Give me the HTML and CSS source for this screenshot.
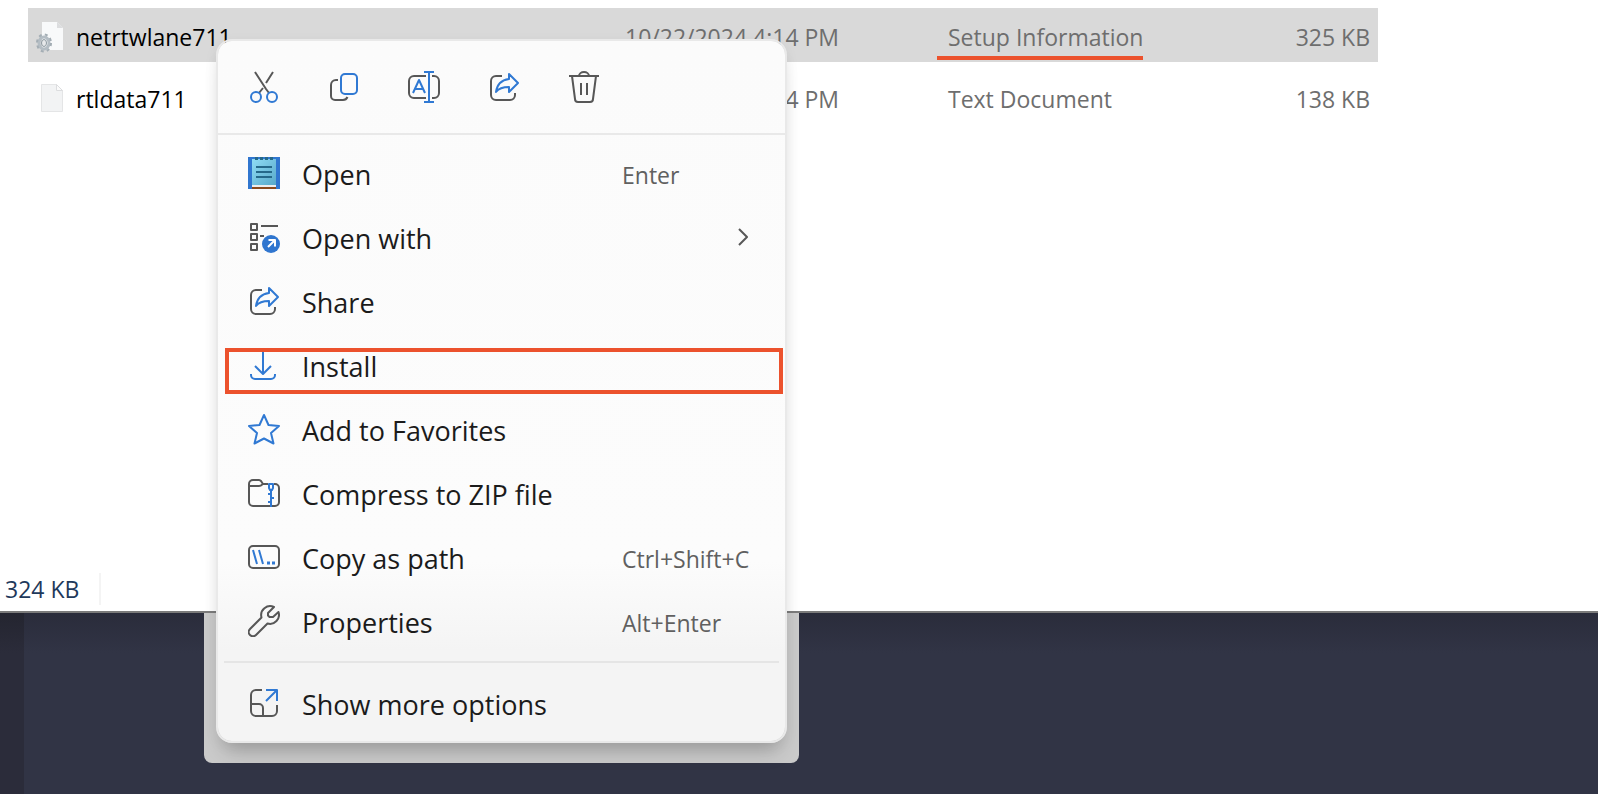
FILE: index.html
```html
<!DOCTYPE html>
<html lang="en">
<head>
<meta charset="utf-8">
<title>File Explorer</title>
<link rel="stylesheet" href="styles.css">
</head>
<body>
<main class="window">
  <table class="files">
    <colgroup><col class="col-name"><col class="col-date"><col class="col-type"><col></colgroup>
    <tbody>
      <tr class="file file-selected">
        <td class="name"><div class="name-box">
          <svg class="file-icon" viewBox="0 0 28 32" aria-hidden="true">
            <path d="M6 1h15l6 6v22H6z" fill="#f8f9fa"/><path d="M21 1l6 6h-6z" fill="#dcdddf"/>
            <ellipse cx="8" cy="22" rx="5" ry="6" fill="none" stroke="#b4bdc4" stroke-width="3"/>
            <ellipse cx="8" cy="22" rx="7" ry="8.500" fill="none" stroke="#a3adb4" stroke-width="2" stroke-dasharray="3 3.200"/>
            <ellipse cx="8" cy="22" rx="2.500" ry="3.500" fill="#e6e8ea" stroke="#8b979f"/>
          </svg>netrtwlane711</div></td>
        <td>10/22/2024 4:14 PM</td>
        <td><span class="marked">Setup Information</span></td>
        <td class="size">325 KB</td>
      </tr>
      <tr class="file">
        <td class="name"><div class="name-box">
          <svg class="file-icon" viewBox="0 0 28 32" aria-hidden="true">
            <path d="M5.500 1.500h15l6 6v21h-21z" fill="#f2f3f4" stroke="#e4e5e6"/><path d="M20.500 1.500v6h6z" fill="#fafafa" stroke="#dcdddf"/>
          </svg>rtldata711</div></td>
        <td>10/22/2024 4:14 PM</td>
        <td>Text Document</td>
        <td class="size">138 KB</td>
      </tr>
    </tbody>
  </table>
  <footer class="status"><span class="status-size">324 KB</span></footer>
</main>
<div class="desktop"><div class="desktop-edge"></div><div class="menu-backdrop"></div></div>

<div class="menu" role="menu">
  <div class="tools">
    <button class="tool" aria-label="Cut"><svg class="icon" viewBox="0 0 32 32"><path d="M7 1l11 17 3 4M25 1l-7 11M15 17l-4 5"/><g class="blue"><circle cx="8" cy="26" r="5"/><circle cx="24" cy="26" r="5"/></g></svg></button>
    <button class="tool" aria-label="Copy"><svg class="icon" viewBox="0 0 32 32"><path d="M10 9H8a5 5 0 0 0-5 5v11a4 4 0 0 0 4 4h8a5 5 0 0 0 4.500-3"/><rect class="blue" x="13" y="3" width="16" height="20" rx="4"/></svg></button>
    <button class="tool" aria-label="Rename"><svg class="icon" viewBox="0 0 32 32"><path d="M18 5H6a5 5 0 0 0-5 5v12a5 5 0 0 0 5 5h12M24 5h2a5 5 0 0 1 5 5v12a5 5 0 0 1-5 5h-2"/><path class="blue" d="M16 1h10M16 31h10M21 1v30M5 22l6-13 6 13M7 18h8"/></svg></button>
    <button class="tool" aria-label="Share"><svg class="icon" viewBox="0 0 32 32"><path d="M14 5H8a5 5 0 0 0-5 5v14a5 5 0 0 0 5 5h14a5 5 0 0 0 5-5v-2"/><path class="blue" d="M21 3l9 9-9 9v-5c-6 0-10 1-13 5 1-8 6-12 13-13z"/></svg></button>
    <button class="tool" aria-label="Delete"><svg class="icon" viewBox="0 0 32 32"><path d="M1 5h30M11 5a5 4 0 0 1 10 0M4 5l3 23a3 3 0 0 0 3 3h12a3 3 0 0 0 3-3l3-23M13 12v12M19 12v12"/></svg></button>
  </div>
  <div class="items">
    <button class="item" role="menuitem"><svg class="icon" viewBox="0 0 32 32">
      <defs><linearGradient id="pad" x1="0" y1="0" x2="1" y2="1"><stop offset="0" stop-color="#8fdcf5"/><stop offset="1" stop-color="#58a9c9"/></linearGradient></defs>
      <g stroke="none"><path d="M0 0h32v32H0z" fill="#3076cf"/><path d="M4 2h24v26H4z" fill="url(#pad)"/><path d="M4 28h24v2H4z" fill="#eee"/><path d="M4 30h24v2H4z" fill="#8a4a1c"/></g>
      <path d="M8 10h16M8 15h16M8 20h16" stroke="#25698a"/><path d="M8.500 0v3M13.500 0v3M18.500 0v3M23.500 0v3" stroke="#25698a" stroke-width="3"/></svg><span class="label">Open</span><kbd class="shortcut">Enter</kbd></button>
    <button class="item" role="menuitem"><svg class="icon" viewBox="0 0 32 32"><path d="M3 3h6v6H3zM3 13h6v6H3zM3 23h6v6H3zM13 5h17M12 15h4"/><circle cx="23" cy="23" r="9" fill="#3076cf" stroke="none"/><path d="M20 26l6-6M20.500 19H27v6.500" stroke="#fff"/></svg><span class="label">Open with</span><svg class="chevron" viewBox="0 0 10 18"><path d="M1 1l8 8-8 8"/></svg></button>
    <button class="item" role="menuitem"><svg class="icon" viewBox="0 0 32 32"><path d="M14 5H8a5 5 0 0 0-5 5v14a5 5 0 0 0 5 5h14a5 5 0 0 0 5-5v-2"/><path class="blue" d="M21 3l9 9-9 9v-5c-6 0-10 1-13 5 1-8 6-12 13-13z"/></svg><span class="label">Share</span></button>
    <button class="item item-marked" role="menuitem"><svg class="icon" viewBox="0 0 32 32"><path class="blue" d="M15 1v24M7 17l8 8 8-8M3 25v1a4 4 0 0 0 4 4h16a4 4 0 0 0 4-4v-1"/></svg><span class="label">Install</span></button>
    <button class="item" role="menuitem"><svg class="icon" viewBox="0 0 32 32"><path class="blue" d="M16 2l4.500 10 10.500 1-8 7 2.500 10.500-9.500-5-9.500 5L9 20l-8-7 10.500-1z"/></svg><span class="label">Add to Favorites</span></button>
    <button class="item" role="menuitem"><svg class="icon" viewBox="0 0 32 32"><path d="M20 7h-5l-2-3a3 3 0 0 0-2-1H5a4 4 0 0 0-4 4v18a4 4 0 0 0 4 4h22a4 4 0 0 0 4-4V11a4 4 0 0 0-4-4h-1M1 9h10c3 0 3-2 4-2"/><path class="blue" d="M21 7h4v4l-1 2h-2l-1-2zM23 13v17M20 17h3M23 21h3M20 25h3"/></svg><span class="label">Compress to ZIP file</span></button>
    <button class="item" role="menuitem"><svg class="icon" viewBox="0 0 32 32"><rect x="1" y="5" width="30" height="22" rx="4"/><path class="blue" d="M5 9l4 14M11 9l4 14"/><path class="blue" stroke-width="3" d="M19 22h3M24 22h3"/></svg><span class="label">Copy as path</span><kbd class="shortcut">Ctrl+Shift+C</kbd></button>
    <button class="item" role="menuitem"><svg class="icon" viewBox="0 0 32 32"><path d="M26 2a9 9 0 0 0-12.500 10.500L2 24a4 4 0 0 0 6 6l11.500-11.500A9 9 0 0 0 30.500 7L25 12h-3.500L20 10.500V8z"/></svg><span class="label">Properties</span><kbd class="shortcut">Alt+Enter</kbd></button>
    <hr class="divider">
    <button class="item" role="menuitem"><svg class="icon" viewBox="0 0 32 32"><path d="M14 3H8a5 5 0 0 0-5 5v16a5 5 0 0 0 5 5h16a5 5 0 0 0 5-5v-6M3 17h8a4 4 0 0 1 4 4v8"/><path class="blue" d="M18 3h11v11M29 3L18 14"/></svg><span class="label">Show more options</span></button>
  </div>
</div>
</body>
</html>
```
FILE: styles.css
```css
* { box-sizing: border-box; }

body {
  position: relative;
  display: flex;
  flex-direction: column;
  min-height: 100vh;
  margin: 0;
  font-family: "Open Sans", "Noto Sans", sans-serif;
  font-size: 23px;
  line-height: 32px;
  background: #313445;
}

.window {
  display: flex;
  flex-direction: column;
  min-height: 613px;
  padding: 0 220px 0 28px;
  border-bottom: 2px solid #7b7b7b;
  background: #fff;
}

.files {
  width: 100%;
  margin-top: 8px;
  table-layout: fixed;
  border-collapse: collapse;
  color: #6e6e6e;
}

.col-name { width: 597px; }
.col-date { width: 323px; }
.col-type { width: 240px; }

.file td { height: 54px; padding: 4px 0 0; white-space: nowrap; }
.file + .file td { height: 62px; padding-top: 12px; }
.file-selected { background: #d9d9d9; }

.name-box { display: flex; align-items: center; gap: 12px; padding-left: 8px; color: #000; }
.file-icon { width: 28px; height: 32px; overflow: visible; }
.file .size { padding-right: 8px; text-align: right; }

.marked { position: relative; }
.marked::after {
  content: "";
  position: absolute;
  left: -11px;
  right: 0;
  bottom: -7px;
  height: 4px;
  background: #ec522d;
}

.status { display: flex; margin: auto 0 6px -28px; }
.status-size {
  padding: 0 20px 0 5px;
  border-right: 2px solid #f4f4f4;
  color: #1e395b;
}

.desktop {
  display: flex;
  flex: 1;
  background: linear-gradient(#2a2c3b, #313445 40px);
}
.desktop-edge { width: 24px; background: linear-gradient(#242530, #2b2c3a 40px); }
.menu-backdrop {
  width: 595px;
  height: 150px;
  margin-left: 180px;
  border-radius: 0 0 8px 8px;
  background: #cacaca;
}

.menu {
  position: absolute;
  top: 39px;
  left: 216px;
  width: 571px;
  border: 2px solid #e9e9e9;
  border-radius: 16px;
  background: linear-gradient(#fbfbfb, #fcfcfc 520px, #f4f4f4 610px);
  background-clip: padding-box;
  box-shadow: 0 16px 20px -8px rgba(0, 0, 0, 0.2), 0 4px 14px rgba(0, 0, 0, 0.06);
}

.tools { display: flex; padding: 0 6px; border-bottom: 2px solid #e9e9e9; }
.tool { display: grid; place-items: center; width: 80px; height: 92px; padding: 0; border: 0; background: none; }

.items { padding: 6px 0; }
.item {
  position: relative;
  display: flex;
  align-items: center;
  width: 100%;
  height: 64px;
  padding: 0 37px 0 30px;
  border: 0;
  background: none;
  color: #1b1b1b;
  font: inherit;
  font-size: 27px;
  text-align: left;
}

.icon, .chevron {
  flex: none;
  width: 32px;
  height: 32px;
  fill: none;
  stroke: #575757;
  stroke-width: 2;
  stroke-linejoin: round;
}
.chevron { width: 10px; height: 18px; margin-left: auto; }
.blue { stroke: #3079d3; }

.label { flex: none; width: 342px; padding: 3px 0 0 22px; }
.shortcut { padding-top: 3px; font-family: inherit; font-size: 23px; color: #606060; white-space: nowrap; }

.item-marked::after {
  content: "";
  position: absolute;
  inset: 15px 2px 3px 7px;
  border: 4px solid #ec522d;
}

.divider { height: 2px; margin: 8px 6px; border: 0; background: #e5e5e5; }
```
